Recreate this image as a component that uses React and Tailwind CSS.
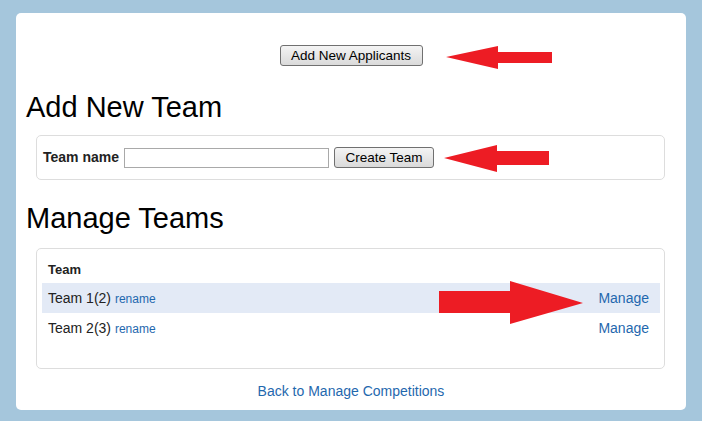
import React from "react";

function Btn({ children, w }) {
  return (
    <button
      className={`h-[21px] ${w} rounded-[3px] border border-[#707070] bg-gradient-to-b from-[#f4f4f4] to-[#dadada] text-[13.5px] leading-none text-black`}
    >
      {children}
    </button>
  );
}

export default function App() {
  return (
    <div
      className="w-[702px] h-[421px] bg-[#a5c6dc] pt-[13px] pl-[16px]"
      style={{ fontFamily: '"Liberation Sans", Arial, sans-serif' }}
    >
      <div className="relative w-[670px] h-[397px] bg-white rounded-[5px] pt-[32px]">
        <div className="flex justify-center">
          <Btn w="w-[143px]">Add New Applicants</Btn>
        </div>

        <h1 className="mt-[25px] pl-[10px] text-[29px] leading-[33px] text-black">Add New Team</h1>

        <div className="mt-[11px] ml-[20px] w-[629px] h-[45px] border border-[#dddddd] rounded-[5px] flex items-center px-[6px]">
          <span className="text-[14px] font-bold text-[#222] mr-[5px]">Team name</span>
          <input className="w-[205px] h-[20px] border border-[#a9a9a9] outline-none" />
          <span className="ml-[5px] flex">
            <Btn w="w-[100px]">Create Team</Btn>
          </span>
        </div>

        <h1 className="mt-[22px] pl-[10px] text-[29px] leading-[33px] text-black">Manage Teams</h1>

        <div className="mt-[13px] ml-[20px] w-[629px] h-[121px] border border-[#dddddd] rounded-[5px] pt-[4px] pl-[5px] pr-[4px]">
          <div className="h-[30px] flex items-center pt-[3px] px-[6px] text-[13px] font-bold text-[#222]">Team</div>
          <div className="h-[30px] flex items-center justify-between bg-[#e3eaf6] pl-[6px] pr-[11px]">
            <span className="text-[14px] text-[#222]">
              Team 1(2) <span className="text-[12px] text-[#1f68ae]">rename</span>
            </span>
            <span className="text-[14px] text-[#1f68ae]">Manage</span>
          </div>
          <div className="h-[30px] flex items-center justify-between pl-[6px] pr-[11px]">
            <span className="text-[14px] text-[#222]">
              Team 2(3) <span className="text-[12px] text-[#1f68ae]">rename</span>
            </span>
            <span className="text-[14px] text-[#1f68ae]">Manage</span>
          </div>
        </div>

        <div className="mt-[12px] text-center text-[14px] text-[#1f68ae]">Back to Manage Competitions</div>

        <svg className="absolute inset-0 pointer-events-none" width="670" height="397" viewBox="0 0 670 397">
          <polygon fill="#ed1c24" points="430,44 482,33 482,39 536,39 536,50 482,50 482,56" />
          <polygon fill="#ed1c24" points="428,145 481,132 481,138 533,138 533,152 481,152 481,159" />
          <polygon fill="#ed1c24" points="423,278 494,278 494,268 567,290 494,311 494,300 423,300" />
        </svg>
      </div>
    </div>
  );
}
